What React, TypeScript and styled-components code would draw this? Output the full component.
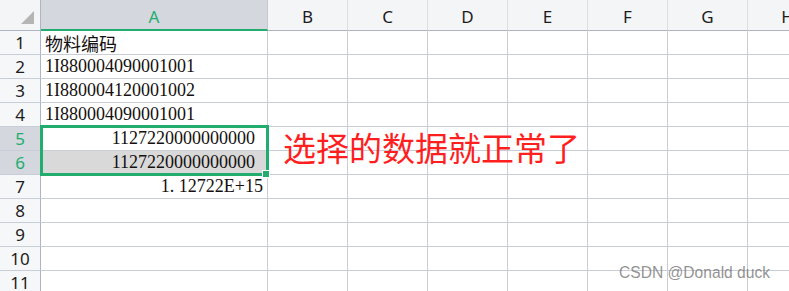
import styled, { createGlobalStyle } from "styled-components";

const GREEN = "#22ad6e";
const GRID = "#c9cdd8";
const HEAD_LINE = "#aeb4c4";

const columns = ["A", "B", "C", "D", "E", "F", "G", "H"];

type Cell = { text: string; align?: "left" | "right"; pad?: number; shaded?: boolean };

const rows: Cell[] = [
  { text: "物料编码" },
  { text: "1I880004090001001" },
  { text: "1I880004120001002" },
  { text: "1I880004090001001" },
  { text: "1127220000000000", align: "right", pad: 12 },
  { text: "1127220000000000", align: "right", pad: 12, shaded: true },
  { text: "1. 12722E+15", align: "right", pad: 4 },
  { text: "" },
  { text: "" },
  { text: "" },
  { text: "" },
];

const selectedRows = [5, 6];

const GlobalStyle = createGlobalStyle`
  html, body {
    margin: 0;
    padding: 0;
    background: #fff;
  }
`;

const Page = styled.div({
  position: "relative",
  width: "789px",
  height: "291px",
  overflow: "hidden",
  background: "#fff",
});

const Sheet = styled.div({
  display: "grid",
  gridTemplateColumns: "41px 227px repeat(7, 80px)",
  gridTemplateRows: "31px repeat(11, 24px)",
  width: "828px",
});

const Corner = styled.div({
  position: "relative",
  background: "#f4f5f7",
  borderRight: `1px solid ${HEAD_LINE}`,
  borderBottom: `1px solid ${HEAD_LINE}`,
  boxSizing: "border-box",
});

const Triangle = styled.div({
  position: "absolute",
  left: "21px",
  top: "11px",
  width: "13px",
  height: "13px",
  background: "#b5b5b5",
  clipPath: "polygon(100% 0, 100% 100%, 0 100%)",
});

const ColHead = styled.div<{ $active?: boolean }>(({ $active }) => ({
  display: "flex",
  alignItems: "center",
  justifyContent: "center",
  boxSizing: "border-box",
  paddingTop: "3px",
  background: $active ? "#d4d7de" : "#f4f5f7",
  borderRight: `1px solid ${$active ? "#c4c8d0" : "#dcdfe5"}`,
  borderBottom: $active ? `2px solid ${GREEN}` : `1px solid ${HEAD_LINE}`,
  color: $active ? GREEN : "#1c1c1c",
  fontFamily: '"Noto Sans", "Open Sans", sans-serif',
  fontSize: "17px",
}));

const RowHead = styled.div<{ $active?: boolean }>(({ $active }) => ({
  display: "flex",
  alignItems: "center",
  justifyContent: "center",
  boxSizing: "border-box",
  background: $active ? "#d4d7de" : "#f6f7f9",
  borderRight: `1px solid ${HEAD_LINE}`,
  borderBottom: `1px solid ${GRID}`,
  color: $active ? GREEN : "#1c1c1c",
  fontFamily: '"Noto Sans", "Open Sans", sans-serif',
  fontSize: "17px",
}));

const DataCell = styled.div<{ $align?: string; $pad?: number; $shaded?: boolean }>(
  ({ $align, $pad, $shaded }) => ({
    display: "flex",
    alignItems: "center",
    justifyContent: $align === "right" ? "flex-end" : "flex-start",
    boxSizing: "border-box",
    padding: $align === "right" ? `0 ${$pad ?? 4}px 0 0` : "0 0 0 4px",
    background: $shaded ? "#d9d9d9" : "#fff",
    borderRight: `1px solid ${GRID}`,
    borderBottom: `1px solid ${GRID}`,
    color: "#141010",
    fontFamily: '"Liberation Serif", "Noto Sans CJK SC", serif',
    fontSize: "18px",
    whiteSpace: "nowrap",
    overflow: "hidden",
  })
);

const EmptyCell = styled.div({
  borderRight: `1px solid ${GRID}`,
  borderBottom: `1px solid ${GRID}`,
  boxSizing: "border-box",
});

const Selection = styled.div({
  position: "absolute",
  left: "40px",
  top: "125px",
  width: "229px",
  height: "51px",
  boxSizing: "border-box",
  border: `3px solid ${GREEN}`,
  pointerEvents: "none",
});

const FillHandle = styled.div({
  position: "absolute",
  right: "-4px",
  bottom: "-5px",
  width: "6px",
  height: "6px",
  background: GREEN,
  border: "1px solid #fff",
});

const Note = styled.div({
  position: "absolute",
  left: "283px",
  top: "127px",
  color: "#ff1f1f",
  fontFamily: '"Noto Sans CJK SC", sans-serif',
  fontSize: "33px",
  lineHeight: "40px",
  whiteSpace: "nowrap",
});

const Watermark = styled.div({
  position: "absolute",
  left: "619px",
  top: "264px",
  color: "rgba(110, 110, 110, 0.75)",
  fontFamily: '"Liberation Sans", Arial, sans-serif',
  fontSize: "15.6px",
  whiteSpace: "nowrap",
});

export default function App() {
  return (
    <>
      <GlobalStyle />
      <Page>
        <Sheet>
          <Corner>
            <Triangle />
          </Corner>
          {columns.map((c) => (
            <ColHead key={c} $active={c === "A"}>
              {c}
            </ColHead>
          ))}
          {rows.map((r, i) => {
            const n = i + 1;
            return [
              <RowHead key={`h${n}`} $active={selectedRows.includes(n)}>
                {n}
              </RowHead>,
              <DataCell key={`a${n}`} $align={r.align} $pad={r.pad} $shaded={r.shaded}>
                {r.text}
              </DataCell>,
              ...columns.slice(1).map((c) => <EmptyCell key={`${c}${n}`} />),
            ];
          })}
        </Sheet>
        <Selection>
          <FillHandle />
        </Selection>
        <Note>选择的数据就正常了</Note>
        <Watermark>CSDN @Donald duck</Watermark>
      </Page>
    </>
  );
}
